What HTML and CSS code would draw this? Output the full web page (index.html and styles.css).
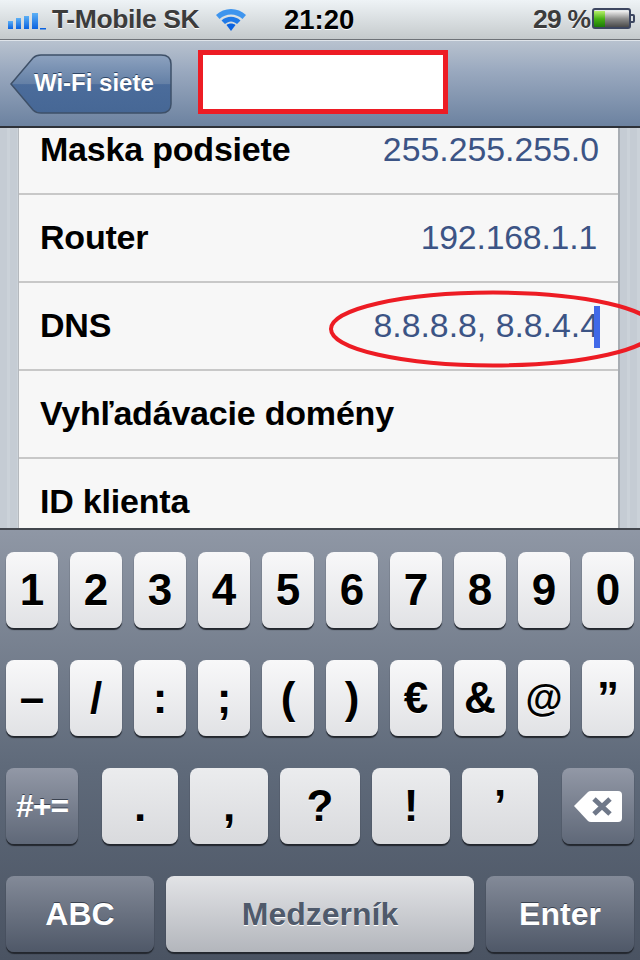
FILE: index.html
```html
<!DOCTYPE html>
<html>
<head>
    <title>Wi-Fi siete</title>
    <link rel="stylesheet" href="styles.css">
</head>
<body>
    <div class="status-bar">
        <svg class="signal" width="40" height="20" viewBox="0 0 40 20">
            <defs>
                <linearGradient id="barFill" x1="0" y1="0" x2="0" y2="1">
                    <stop offset="0" stop-color="#5cb0f5"/>
                    <stop offset="1" stop-color="#0a62e0"/>
                </linearGradient>
            </defs>
            <rect x="0" y="10" width="5" height="8" fill="url(#barFill)"/>
            <rect x="8" y="7" width="5" height="11" fill="url(#barFill)"/>
            <rect x="16" y="5" width="5" height="13" fill="url(#barFill)"/>
            <rect x="24" y="2" width="6" height="16" fill="url(#barFill)"/>
            <rect x="32" y="17" width="6" height="1.500" fill="#0a62e0"/>
        </svg>
        <span class="carrier">T-Mobile SK</span>
        <svg class="wifi" width="32" height="26" viewBox="0 0 32 26">
            <path d="M1 9 C9 1 23 1 31 9 L27.500 13 C21 7 11 7 4.500 13 Z" fill="#3f95ee"/>
            <path d="M6.500 14.500 C12 9.500 20 9.500 25.500 14.500 L22 18 C18 14.500 14 14.500 10 18 Z" fill="#2079e6"/>
            <path d="M11.500 19 C14 17 18 17 20.500 19 L16 25 Z" fill="#0a62e0"/>
        </svg>
        <span class="clock">21:20</span>
        <span class="percent">29 %</span>
        <svg class="battery" width="43" height="22" viewBox="0 0 43 22">
            <defs>
                <linearGradient id="battEmpty" x1="0" y1="0" x2="0" y2="1">
                    <stop offset="0" stop-color="#f0f0f0"/>
                    <stop offset="0.5" stop-color="#8a8a8a"/>
                    <stop offset="1" stop-color="#4a4a4a"/>
                </linearGradient>
                <linearGradient id="battFull" x1="0" y1="0" x2="0" y2="1">
                    <stop offset="0" stop-color="#b6ee6a"/>
                    <stop offset="0.5" stop-color="#45b012"/>
                    <stop offset="1" stop-color="#1c7a08"/>
                </linearGradient>
            </defs>
            <rect x="2" y="3" width="35" height="16" fill="url(#battEmpty)"/>
            <rect x="2" y="3" width="11" height="16" fill="url(#battFull)"/>
            <rect x="1" y="1" width="37" height="19" rx="2" fill="none" stroke="#3c4660" stroke-width="2"/>
            <path d="M38 7 h3 a1 1 0 0 1 1 1 v5 a1 1 0 0 1 -1 1 h-3" fill="none" stroke="#3c4660" stroke-width="2"/>
        </svg>
    </div>

    <div class="nav-bar">
        <div class="back-btn">
            <svg width="162" height="60" viewBox="0 0 162 60">
                <defs>
                    <linearGradient id="backFill" x1="0" y1="0" x2="0" y2="1">
                        <stop offset="0" stop-color="#8da2bf"/>
                        <stop offset="0.5" stop-color="#6480a6"/>
                        <stop offset="0.51" stop-color="#4b6c9b"/>
                        <stop offset="1" stop-color="#466795"/>
                    </linearGradient>
                </defs>
                <path d="M1 30 L23 4 Q26 1 31 1 H151 Q161 1 161 10 V50 Q161 59 151 59 H31 Q26 59 23 56 Z" fill="url(#backFill)" stroke="#3e5068" stroke-width="1.500"/>
            </svg>
            <span class="back-label">Wi-Fi siete</span>
        </div>
        <div class="hidden-title"></div>
    </div>

    <div class="settings">
        <div class="group">
            <div class="row row-first"><span class="label">Maska podsiete</span><span class="value">255.255.255.0</span></div>
            <div class="row"><span class="label">Router</span><span class="value value-short">192.168.1.1</span></div>
            <div class="row"><span class="label">DNS</span><span class="value value-edit">8.8.8.8, 8.8.4.4<i class="caret"></i></span></div>
            <div class="row"><span class="label">Vyhľadávacie domény</span></div>
            <div class="row"><span class="label">ID klienta</span></div>
        </div>
        <svg class="circle" width="320" height="100" viewBox="0 0 320 100">
            <ellipse cx="173" cy="51" rx="162" ry="36.500" fill="none" stroke="#ed1c24" stroke-width="4"/>
        </svg>
    </div>

    <div class="keyboard">
        <div class="key-row">
            <div class="key">1</div><div class="key">2</div><div class="key">3</div><div class="key">4</div><div class="key">5</div>
            <div class="key">6</div><div class="key">7</div><div class="key">8</div><div class="key">9</div><div class="key">0</div>
        </div>
        <div class="key-row">
            <div class="key">–</div><div class="key">/</div><div class="key">:</div><div class="key">;</div><div class="key">(</div>
            <div class="key">)</div><div class="key">€</div><div class="key">&amp;</div><div class="key key-at">@</div><div class="key">”</div>
        </div>
        <div class="key-row key-row-3">
            <div class="key key-dark key-small">#+=</div>
            <div class="key-punct">
                <div class="key key-w76">.</div>
                <div class="key key-w78">,</div>
                <div class="key key-w80">?</div>
                <div class="key key-w78">!</div>
                <div class="key key-w76">’</div>
            </div>
            <div class="key key-dark">
                <svg width="48" height="34" viewBox="0 0 48 34">
                    <path d="M0 17 L14 3 Q15 2 17 2 H44 Q48 2 48 6 V29 Q48 33 44 33 H17 Q15 33 14 32 Z" fill="#fff"/>
                    <path d="M20 10 L36 25 M36 10 L20 25" stroke="#6f7889" stroke-width="5" fill="none"/>
                </svg>
            </div>
        </div>
        <div class="key-row">
            <div class="key key-dark key-wide key-label">ABC</div>
            <div class="key key-space key-label">Medzerník</div>
            <div class="key key-dark key-wide key-label">Enter</div>
        </div>
    </div>
</body>
</html>
```

FILE: styles.css
```css
body {
    font-family: "Liberation Sans", Arial, sans-serif;
    margin: 0;
    width: 640px;
    height: 960px;
    overflow: hidden;
    background-color: #4a5362;
}
.status-bar {
    height: 39px;
    display: flex;
    align-items: center;
    padding-left: 8px;
    background: linear-gradient(#eef3f6, #c5cacc);
    border-bottom: 1px solid #6f7378;
    font-size: 26.500px;
    font-weight: bold;
    color: #3c3c3c;
    text-shadow: 0 1px 0 #fff;
}
.signal {
    margin-top: 3px;
    margin-right: 4px;
}
.carrier {
    width: 163px;
    letter-spacing: -0.4px;
}
.wifi {
    margin-top: -1px;
    margin-right: 37px;
}
.clock {
    width: 249px;
    color: #000;
    font-size: 27.500px;
}
.percent {
    width: 59px;
    letter-spacing: -0.8px;
}
.battery {
    margin-top: -2px;
}
.nav-bar {
    height: 88px;
    box-sizing: border-box;
    display: flex;
    align-items: flex-start;
    padding: 9px 0 0 10px;
    background: linear-gradient(#b8c2cf, #9aa9bf 35%, #6c82a0);
    border-top: 1px solid #dfe4ea;
    border-bottom: 2px solid #2d3138;
}
.back-btn {
    display: grid;
    width: 162px;
    height: 60px;
    margin-top: 4px;
}
.back-btn svg, .back-label {
    grid-area: 1 / 1;
}
.back-label {
    padding-left: 24px;
    line-height: 57px;
    font-size: 24px;
    font-weight: bold;
    color: #fff;
    text-shadow: 0 -1px 0 #2f4666;
}
.hidden-title {
    width: 240px;
    height: 54px;
    margin-left: 26px;
    background: #fff;
    border: 5px solid #ed1c24;
}
.settings {
    position: relative;
    height: 400px;
    overflow: hidden;
    padding: 0 18px;
    background: repeating-linear-gradient(90deg, #c5ccd4 0, #c5ccd4 7px, #cbd2d9 7px, #cbd2d9 10px);
}
.group {
    background: #f7f7f7;
    border-left: 1px solid #b4b8bd;
    border-right: 2px solid #a8adb3;
    box-sizing: border-box;
    height: 400px;
    margin-right: 2px;
}
.row {
    height: 88px;
    box-sizing: border-box;
    display: flex;
    justify-content: space-between;
    align-items: center;
    padding: 0 19px 2px 21px;
    border-bottom: 2px solid #c8c8c8;
}
.row-first {
    height: 67px;
    padding-bottom: 22px;
}
.label {
    font-size: 34px;
    font-weight: bold;
    letter-spacing: -0.2px;
    color: #000;
}
.value {
    font-size: 33.800px;
    color: #3c5485;
}
.value-short {
    margin-right: 2px;
    letter-spacing: -0.2px;
}
.value-edit {
    display: flex;
    align-items: center;
}
.caret {
    width: 6px;
    height: 42px;
    margin: 4px -1px 0 -5px;
    background: #4169e8;
}
.circle {
    position: absolute;
    right: 0;
    top: 150px;
}
.keyboard {
    height: 432px;
    box-sizing: border-box;
    padding: 22px 6px 0;
    background: linear-gradient(#8f97a5, #5f6a7a 55%, #4a5362);
    border-top: 2px solid #43474e;
}
.key-row {
    display: flex;
    justify-content: space-between;
    height: 76px;
    margin-bottom: 32px;
}
.key-punct {
    display: flex;
    gap: 12px;
}
.key {
    width: 52px;
    height: 76px;
    display: flex;
    align-items: center;
    justify-content: center;
    border-radius: 8px;
    background: linear-gradient(#f8f8f9, #e1e2e5);
    box-shadow: 0 2px 1px #23272e;
    font-size: 44px;
    font-weight: bold;
    color: #000;
    text-shadow: 0 1px 0 #fff;
}
.key-at {
    font-size: 38px;
}
.key-w76 {
    width: 76px;
}
.key-w78 {
    width: 78px;
}
.key-w80 {
    width: 80px;
}
.key-row-3 .key-punct .key {
    background: linear-gradient(#ebecee, #d9dadd);
}
.key-dark {
    width: 72px;
    background: linear-gradient(#9298a6, #5f6878);
    color: #fff;
    text-shadow: 0 -1px 0 #3a4250;
}
.key-small {
    font-size: 32px;
    letter-spacing: -1px;
}
.key-wide {
    width: 148px;
    background: linear-gradient(#838a98, #4f5868);
}
.key-label {
    font-size: 32px;
    letter-spacing: 0;
}
.key-space {
    width: 308px;
    background: linear-gradient(#e2e3e6, #b3b6bc);
    color: #4f5a6b;
    text-shadow: 0 1px 0 #fff;
}
```
